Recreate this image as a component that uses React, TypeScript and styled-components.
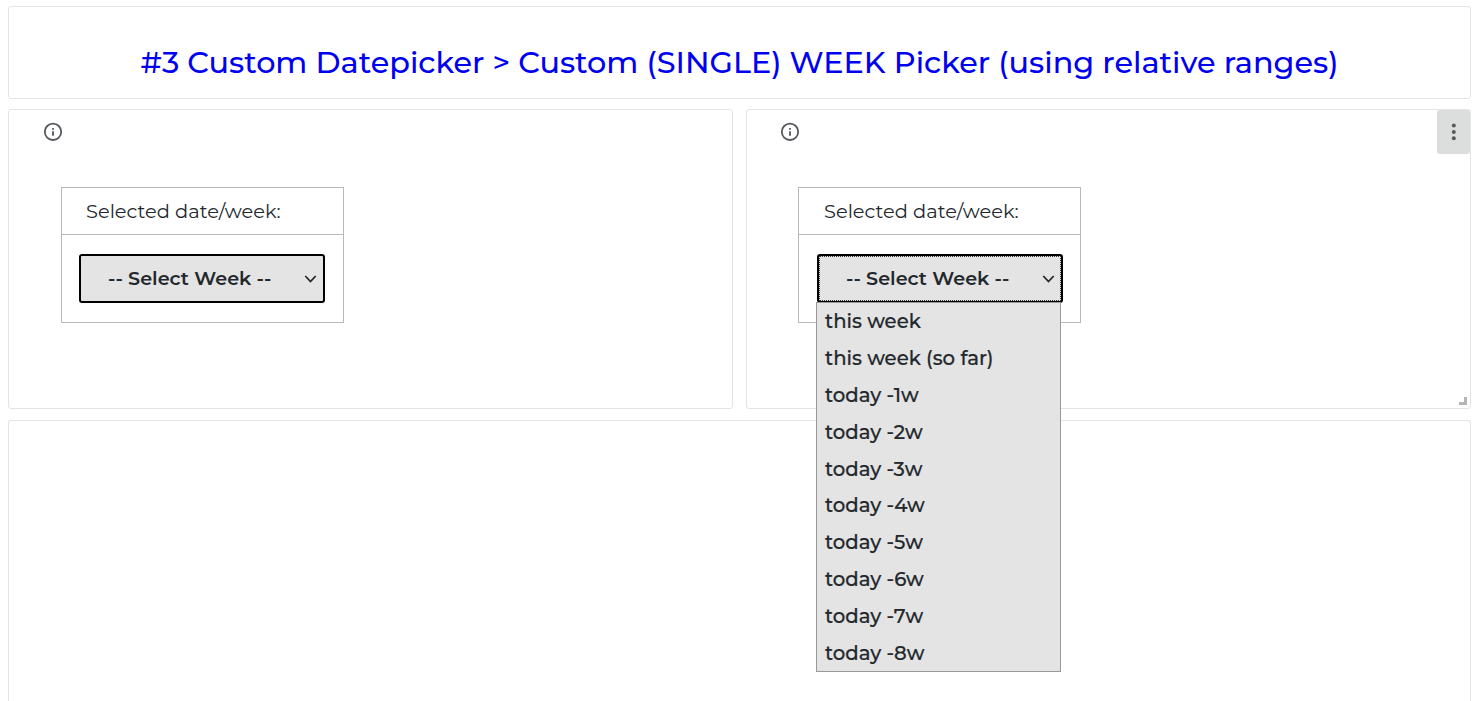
import React from "react";
import styled, { createGlobalStyle } from "styled-components";

const GlobalStyle = createGlobalStyle`
  * { box-sizing: border-box; }
  body {
    margin: 0;
    background: #fff;
    overflow: hidden;
    font-family: Montserrat, Inter, sans-serif;
    color: #23282d;
  }
`;

const Dashboard = styled.main`
  display: grid;
  grid-template-columns: 725px 725px;
  grid-template-rows: 103px 311px 281px;
  column-gap: 13px;
  padding: 6px 0 0 8px;
  width: 1480px;
  height: 701px;
  overflow: hidden;
`;

const Panel = styled.section`
  position: relative;
  border: 1px solid #e3e4e4;
  border-radius: 3px;
  background: #fff;
`;

const TitlePanel = styled(Panel)`
  grid-column: 1 / -1;
  display: flex;
  justify-content: center;
  height: 93px;
  padding-top: 36px;
`;

const Title = styled.h1`
  margin: 0;
  font-size: 30.3px;
  line-height: 40px;
  font-weight: 500;
  white-space: nowrap;
  color: #0000f0;
`;

const FilterPanel = styled(Panel)<{ $indent: number }>`
  height: 300px;
  padding: 12px 0 0 ${(p) => p.$indent}px;
`;

const BottomPanel = styled(Panel)`
  grid-column: 1 / -1;
  border-bottom: 0;
  border-radius: 3px 3px 0 0;
`;

const InfoIcon = styled.svg`
  display: block;
  width: 20px;
  height: 20px;
`;

const Picker = styled.div`
  width: 283px;
  height: 136px;
  margin: 45px 0 0 18px;
  border: 1px solid #b9b9b9;
`;

const PickerLabel = styled.div<{ $indent: number }>`
  height: 47px;
  padding-left: ${(p) => p.$indent}px;
  border-bottom: 1px solid #b9b9b9;
  font-size: 19.4px;
  line-height: 47px;
  white-space: nowrap;
`;

const SelectArea = styled.div<{ $inset: number }>`
  position: relative;
  padding: 19px 0 0 ${(p) => p.$inset}px;
`;

const SelectButton = styled.button<{ $open?: boolean }>`
  display: flex;
  align-items: center;
  justify-content: space-between;
  width: 246px;
  height: 49px;
  margin: 0;
  padding: 0 6px 2px 27px;
  border: 2px solid #000;
  border-radius: 3px;
  background: #e4e4e4;
  outline: ${(p) => (p.$open ? "1px dotted #333" : "none")};
  outline-offset: -3px;
  color: #23282d;
  font: 600 19.2px/24px Montserrat, Inter, sans-serif;
  white-space: nowrap;
`;

const Chevron = styled.svg`
  width: 13px;
  height: 10px;
  margin-top: 3px;
`;

const Options = styled.ul`
  position: absolute;
  z-index: 2;
  top: 67px;
  left: 17px;
  width: 245px;
  height: 370px;
  margin: 0;
  padding: 0 0 0 8px;
  border: 1px solid #999;
  background: #e4e4e4;
  list-style: none;
`;

const Option = styled.li`
  height: 36.9px;
  font-size: 19.7px;
  font-weight: 500;
  line-height: 36.4px;
  white-space: nowrap;
  -webkit-text-stroke: 0.2px #23282d;
`;

const MenuButton = styled.button`
  position: absolute;
  top: 0;
  right: 0;
  width: 33px;
  height: 44px;
  padding: 0;
  border: 0;
  border-radius: 3px;
  background: #dcdedd;
`;

const MenuDots = styled.svg`
  display: block;
  width: 33px;
  height: 44px;
`;

const ResizeHandle = styled.span`
  position: absolute;
  right: 3px;
  bottom: 3px;
  width: 8px;
  height: 8px;
  border-right: 3px solid #b5b5b5;
  border-bottom: 3px solid #b5b5b5;
`;

const weeks = [
  "this week",
  "this week (so far)",
  ...[1, 2, 3, 4, 5, 6, 7, 8].map((n) => `today -${n}w`),
];

const Info = () => (
  <InfoIcon viewBox="0 0 20 20" fill="none">
    <circle cx="10" cy="9.8" r="8.2" stroke="#55595d" strokeWidth="1.8" />
    <path d="M10 6v1.8M10 9.2v4.6" stroke="#55595d" strokeWidth="1.8" />
  </InfoIcon>
);

const WeekPicker = ({ open = false }: { open?: boolean }) => (
  <Picker>
    <PickerLabel $indent={open ? 25 : 24}>Selected date/week:</PickerLabel>
    <SelectArea $inset={open ? 18 : 17}>
      <SelectButton $open={open}>
        -- Select Week --
        <Chevron viewBox="0 0 13 10" fill="none">
          <path d="M1.3 2l5.2 5.5 5.2-5.5" stroke="#23282d" strokeWidth="1.8" />
        </Chevron>
      </SelectButton>
      {open && (
        <Options>
          {weeks.map((w) => (
            <Option key={w}>{w}</Option>
          ))}
        </Options>
      )}
    </SelectArea>
  </Picker>
);

export default function App() {
  return (
    <>
      <GlobalStyle />
      <Dashboard>
        <TitlePanel>
          <Title>#3 Custom Datepicker &gt; Custom (SINGLE) WEEK Picker (using relative ranges)</Title>
        </TitlePanel>
        <FilterPanel $indent={34}>
          <Info />
          <WeekPicker />
        </FilterPanel>
        <FilterPanel $indent={33}>
          <Info />
          <WeekPicker open />
          <MenuButton aria-label="Panel menu">
            <MenuDots viewBox="0 0 33 44" fill="#55595d">
              <circle cx="16.8" cy="15.5" r="2" />
              <circle cx="16.8" cy="22" r="2" />
              <circle cx="16.8" cy="28.3" r="2" />
            </MenuDots>
          </MenuButton>
          <ResizeHandle />
        </FilterPanel>
        <BottomPanel />
      </Dashboard>
    </>
  );
}
